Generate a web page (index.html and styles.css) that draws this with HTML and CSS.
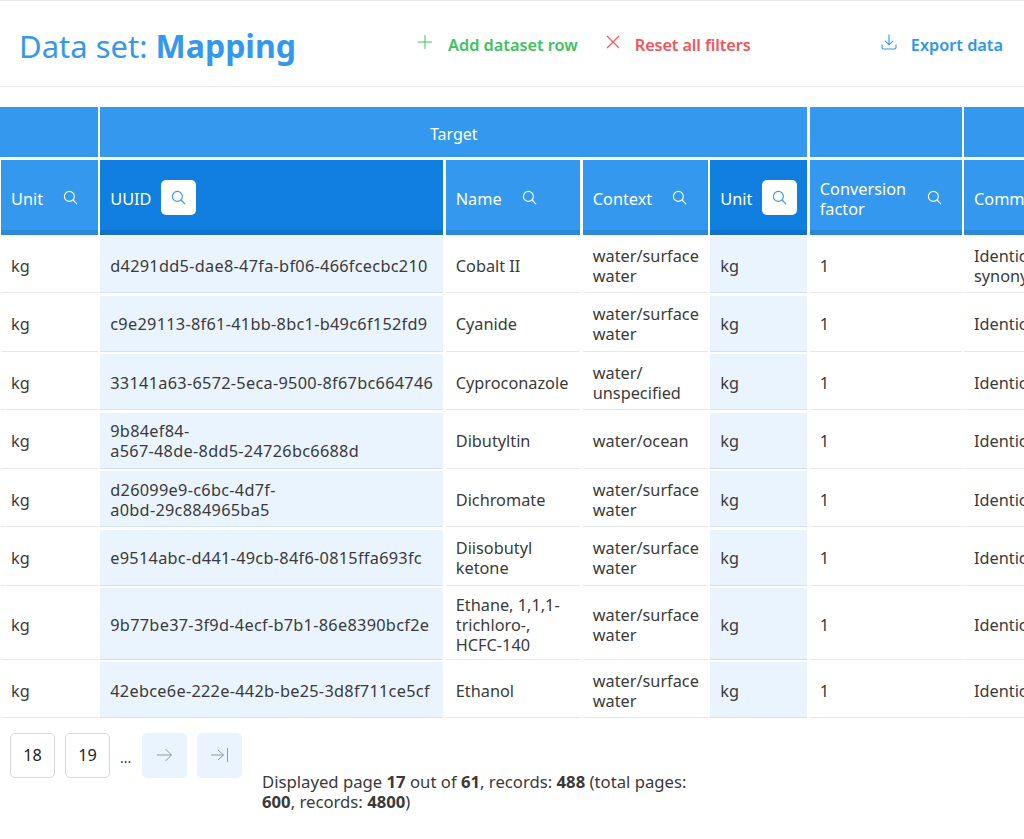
FILE: index.html
```html
<!DOCTYPE html>
<html lang="en">
<head>
<meta charset="utf-8">
<title>Data set: Mapping</title>
<link rel="stylesheet" href="styles.css">
</head>
<body>
<svg class="defs" width="0" height="0" aria-hidden="true">
  <symbol id="search" viewBox="0 0 16 16"><circle cx="6.8" cy="6.8" r="5.3" fill="none" stroke="currentColor" stroke-width="1.2"/><path d="M10.7 10.7 15 15" fill="none" stroke="currentColor" stroke-width="1.3"/></symbol>
</svg>
<header class="topbar">
  <h1 class="title">Data set: <strong>Mapping</strong></h1>
  <div class="actions">
    <a class="action add"><svg class="ico" viewBox="0 0 14 14"><path d="M7 0v14M0 7h14" fill="none" stroke="currentColor" stroke-width="1"/></svg>Add dataset row</a>
    <a class="action reset"><svg class="ico" viewBox="0 0 14 14"><path d="M1 1l12 12M13 1 1 13" fill="none" stroke="currentColor" stroke-width="1.1"/></svg>Reset all filters</a>
  </div>
  <a class="action export"><svg class="ico" viewBox="0 0 16 16"><path d="M8 0.5v10M4 6.8 8 10.8l4-4M1 10.5v3c0 .9.6 1.5 1.5 1.5h11c.9 0 1.5-.6 1.5-1.5v-3" fill="none" stroke="currentColor" stroke-width="1.1"/></svg>Export data</a>
</header>
<main class="table-wrap">
  <div class="grid">
    <div class="group first"></div>
    <div class="group target">Target</div>
    <div class="group"></div>
    <div class="group"></div>

    <div class="head c1"><span>Unit</span><button class="find"><svg class="s"><use href="#search"/></svg></button></div>
    <div class="head on"><span>UUID</span><button class="find"><svg class="s"><use href="#search"/></svg></button></div>
    <div class="head"><span>Name</span><button class="find"><svg class="s"><use href="#search"/></svg></button></div>
    <div class="head"><span>Context</span><button class="find"><svg class="s"><use href="#search"/></svg></button></div>
    <div class="head on"><span>Unit</span><button class="find"><svg class="s"><use href="#search"/></svg></button></div>
    <div class="head"><span>Conversion factor</span><button class="find"><svg class="s"><use href="#search"/></svg></button></div>
    <div class="head"><span>Comment</span></div>

    <div class="cell c1">kg</div><div class="cell hi uuid">d4291dd5-dae8-47fa-bf06-466fcecbc210</div><div class="cell">Cobalt II</div><div class="cell">water/surface water</div><div class="cell hi">kg</div><div class="cell">1</div><div class="cell">Identical synonym</div>
    <div class="cell c1">kg</div><div class="cell hi uuid">c9e29113-8f61-41bb-8bc1-b49c6f152fd9</div><div class="cell">Cyanide</div><div class="cell">water/surface water</div><div class="cell hi">kg</div><div class="cell">1</div><div class="cell">Identical</div>
    <div class="cell c1">kg</div><div class="cell hi uuid">33141a63-6572-5eca-9500-8f67bc664746</div><div class="cell">Cyproconazole</div><div class="cell">water/ unspecified</div><div class="cell hi">kg</div><div class="cell">1</div><div class="cell">Identical</div>
    <div class="cell c1">kg</div><div class="cell hi uuid">9b84ef84-<br>a567-48de-8dd5-24726bc6688d</div><div class="cell">Dibutyltin</div><div class="cell">water/ocean</div><div class="cell hi">kg</div><div class="cell">1</div><div class="cell">Identical</div>
    <div class="cell c1">kg</div><div class="cell hi uuid">d26099e9-c6bc-4d7f-<br>a0bd-29c884965ba5</div><div class="cell">Dichromate</div><div class="cell">water/surface water</div><div class="cell hi">kg</div><div class="cell">1</div><div class="cell">Identical</div>
    <div class="cell c1">kg</div><div class="cell hi uuid">e9514abc-d441-49cb-84f6-0815ffa693fc</div><div class="cell">Diisobutyl ketone</div><div class="cell">water/surface water</div><div class="cell hi">kg</div><div class="cell">1</div><div class="cell">Identical</div>
    <div class="cell c1">kg</div><div class="cell hi uuid">9b77be37-3f9d-4ecf-b7b1-86e8390bcf2e</div><div class="cell"><span>Ethane, 1,1,1-<br>trichloro-,<br>HCFC-140</span></div><div class="cell">water/surface water</div><div class="cell hi">kg</div><div class="cell">1</div><div class="cell">Identical</div>
    <div class="cell c1">kg</div><div class="cell hi uuid">42ebce6e-222e-442b-be25-3d8f711ce5cf</div><div class="cell">Ethanol</div><div class="cell">water/surface water</div><div class="cell hi">kg</div><div class="cell">1</div><div class="cell">Identical</div>
  </div>
</main>
<footer class="footer">
  <nav class="pager">
    <a class="page">18</a>
    <a class="page">19</a>
    <span class="dots">...</span>
    <a class="page off"><svg class="arrow" viewBox="0 0 16 14"><path d="M0 7h14.5M8.5 1l6 6-6 6" fill="none" stroke="currentColor" stroke-width="1"/></svg></a>
    <a class="page off"><svg class="arrow" viewBox="0 0 18 14"><path d="M0 7h12.5M7 2l5.5 5L7 12M16.5 0v14" fill="none" stroke="currentColor" stroke-width="1"/></svg></a>
  </nav>
  <p class="summary">Displayed page <b>17</b> out of <b>61</b>, records: <b>488</b> (total pages: <b>600</b>, records: <b>4800</b>)</p>
</footer>
</body>
</html>
```
FILE: styles.css
```css
* { box-sizing: border-box; }
html, body { margin: 0; padding: 0; }
body {
  width: 1024px;
  height: 839px;
  overflow: hidden;
  background: #fff;
  color: #3a3a3a;
  font-family: "Noto Sans", "Open Sans", sans-serif;
  font-size: 16.3px;
  line-height: 20px;
}
.defs { position: absolute; }
.topbar {
  height: 87px;
  display: flex;
  align-items: center;
  padding: 0 21px 0 19px;
  border-top: 1px solid #e8eaed;
  border-bottom: 1px solid #e8eaed;
}
.title {
  margin: 4px 0 0;
  width: 399px;
  font-size: 31px;
  line-height: 40px;
  font-weight: 400;
  color: #3498ee;
}
.title strong { font-weight: 700; font-size: 32px; }
.actions { display: flex; gap: 28px; flex: 1; }
.action { display: flex; align-items: center; font-weight: 600; padding-top: 3px; }
.ico { width: 14px; height: 14px; margin-right: 16px; margin-top: -6px; }
.add { color: #3ec25e; }
.reset { color: #f5535b; letter-spacing: -0.12px; }
.reset .ico { margin-right: 15px; }
.export { color: #2f96ee; }
.export .ico { width: 16px; height: 16px; margin-right: 14px; }

.table-wrap { margin-top: 20px; overflow: hidden; width: 1024px; }
.grid {
  display: grid;
  width: 1084px;
  grid-template-columns: 97.75px 343px 134.5px 125px 97px 151.75px 120px;
  grid-template-rows: 50px 75.25px repeat(6, 56px) 71.5px 56px;
  gap: 2.5px;
}
.group {
  background: #3498ee;
  color: #fff;
  display: flex;
  align-items: center;
  justify-content: center;
  padding-top: 3px;
  font-size: 16px;
}
.target { grid-column: span 4; }
.head {
  background: #3498ee;
  box-shadow: inset 0 -5px 0 #2c88da;
  color: #fff;
  display: flex;
  align-items: center;
  padding: 0 10px;
}
.head.on { background: #107fe0; box-shadow: inset 0 -5px 0 #0f72d0; }
.head span { margin: 3px 10px 0 0; }
.find {
  flex: none;
  width: 35px;
  height: 35px;
  padding: 0;
  border: 0;
  border-radius: 5px;
  background: transparent;
  color: #fff;
  display: flex;
  align-items: center;
  justify-content: center;
}
.on .find { background: #fff; color: #3498ee; }
.s { width: 15px; height: 15px; }
.c1 { margin-left: 1px; }
.cell {
  display: flex;
  align-items: center;
  padding: 2px 10px 0;
  border-bottom: 1.5px solid #e6e8eb;
}
.hi { background: #e9f4fe; border-bottom-color: #d5e1ec; display: block; align-content: center; }
.uuid { letter-spacing: 0.29px; }
.footer { display: flex; align-items: flex-start; padding: 14.5px 0 0 10px; }
.pager { display: flex; align-items: center; gap: 10px; }
.page {
  width: 45px;
  height: 45px;
  border: 1px solid #d5d8dd;
  border-radius: 5px;
  color: #222;
  display: flex;
  align-items: center;
  justify-content: center;
}
.page.off { background: #e9f4fe; border-color: #e9f4fe; color: #8f9aa5; }
.arrow { width: 16px; height: 14px; }
.page.off + .page.off .arrow { width: 18px; }
.dots { font-size: 14px; width: 12px; margin-top: 6px; }
.summary { margin: 39px 0 0 20px; width: 430px; font-size: 16.7px; }
```
